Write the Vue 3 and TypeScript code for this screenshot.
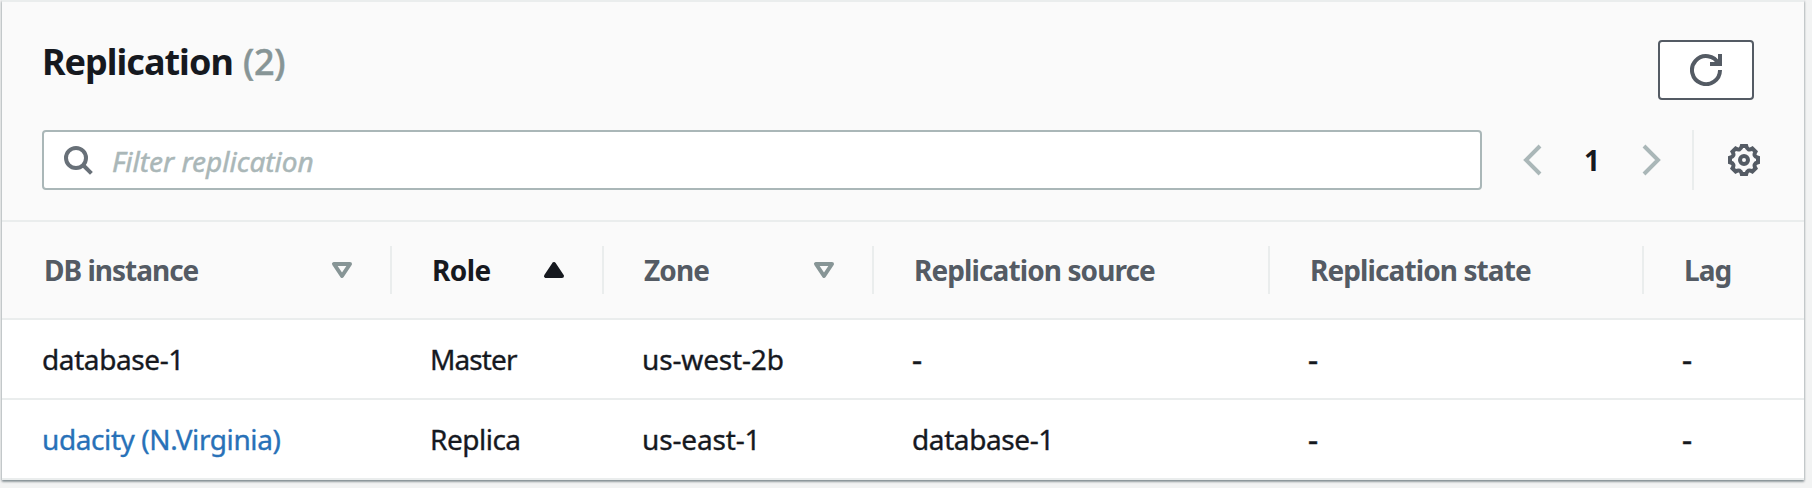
<script setup lang="ts">
type Sort = 'none' | 'asc' | null
interface Column { key: string; label: string; sort: Sort }
interface Cell { text: string; fit: string; link?: boolean }

const columns: Column[] = [
  { key: 'instance', label: 'DB instance', sort: 'none' },
  { key: 'role', label: 'Role', sort: 'asc' },
  { key: 'zone', label: 'Zone', sort: 'none' },
  { key: 'source', label: 'Replication source', sort: null },
  { key: 'state', label: 'Replication state', sort: null },
  { key: 'lag', label: 'Lag', sort: null },
]

const rows: Cell[][] = [
  [
    { text: 'database-1', fit: 'snug' },
    { text: 'Master', fit: 'tight' },
    { text: 'us-west-2b', fit: 'plain' },
    { text: '-', fit: 'dash' },
    { text: '-', fit: 'dash' },
    { text: '-', fit: 'dash' },
  ],
  [
    { text: 'udacity (N.Virginia)', fit: 'snug', link: true },
    { text: 'Replica', fit: 'close' },
    { text: 'us-east-1', fit: 'plain' },
    { text: 'database-1', fit: 'snug' },
    { text: '-', fit: 'dash' },
    { text: '-', fit: 'dash' },
  ],
]

// Outline of an eight-toothed wheel, centred on (16, 16).
const gear = Array.from({ length: 8 }, (_, i) => {
  const at = (deg: number, r: number) => {
    const a = ((i * 45 + deg) * Math.PI) / 180
    return `${(16 + r * Math.sin(a)).toFixed(2)} ${(16 - r * Math.cos(a)).toFixed(2)}`
  }
  return `${i ? 'L' : 'M'}${at(-9, 14.2)}L${at(9, 14.2)}Q${at(22.5, 9.4)} ${at(36, 14.2)}`
}).join('') + 'Z'
</script>

<template>
  <main class="page">
    <section class="panel">
      <header class="head">
        <div class="title-row">
          <h2 class="title"><span class="name">Replication</span><span class="count">(2)</span></h2>
          <button class="refresh" aria-label="Refresh">
            <svg class="icon" viewBox="0 0 16 16"><path d="M10 5h5V0" /><path d="M15 8a7 7 0 1 1-.7-3" /></svg>
          </button>
        </div>
        <div class="tools">
          <div class="filter">
            <svg class="icon search" viewBox="0 0 32 32"><circle cx="14" cy="14" r="10" /><path d="M21 21l8.4 8.4" /></svg>
            <span class="placeholder">Filter replication</span>
          </div>
          <nav class="pager">
            <svg class="icon chev" viewBox="0 0 16 16"><path d="M12 1L5 8l7 7" /></svg>
            <span class="num">1</span>
            <svg class="icon chev" viewBox="0 0 16 16"><path d="M4 1l7 7-7 7" /></svg>
          </nav>
          <div class="settings">
            <svg class="icon gear" viewBox="0 0 32 32"><path :d="gear" /><circle cx="16" cy="16" r="4" /></svg>
          </div>
        </div>
      </header>
      <div class="row labels">
        <div v-for="c in columns" :key="c.key" class="th" :class="{ active: c.sort === 'asc' }">
          <span class="text">{{ c.label }}</span>
          <svg v-if="c.sort" class="icon sort" :class="c.sort" viewBox="0 0 16 16">
            <path :d="c.sort === 'asc' ? 'M4 11h8L8 5l-4 6z' : 'M4 5h8l-4 6-4-6z'" />
          </svg>
        </div>
      </div>
      <div v-for="(r, i) in rows" :key="i" class="row data">
        <div v-for="(c, j) in r" :key="j" class="td">
          <a v-if="c.link" class="text link" :class="c.fit">{{ c.text }}</a>
          <span v-else class="text" :class="c.fit">{{ c.text }}</span>
        </div>
      </div>
    </section>
  </main>
</template>

<style>
html, body { background: #f2f3f3; margin: 0; overflow: hidden; }
</style>

<style scoped>
* { box-sizing: border-box; }
.page {
  width: 1812px; height: 488px; padding: 0 0 0 2px; background: #f2f3f3;
  font-family: "Noto Sans", "Open Sans", sans-serif; font-size: 28px; color: #16191f; overflow: hidden;
}
.panel {
  width: 1802px; height: 480px; background: #fff; border-top: 2px solid #eaeded;
  box-shadow: 0 2px 2px 0 rgba(0, 28, 36, .3), 1px 1px 2px 0 rgba(0, 28, 36, .15), -1px 1px 2px 0 rgba(0, 28, 36, .15);
}
.head { height: 220px; background: #fafafa; border-bottom: 2px solid #eaeded; padding: 38px 40px 0; }
.title-row { display: flex; justify-content: space-between; align-items: flex-start; height: 90px; padding-right: 10px; }
.title { margin: 0; font-size: 36px; line-height: 44px; font-weight: 700; white-space: nowrap; display: flex; }
.name { width: 201px; letter-spacing: -1px; }
.count { color: #879596; font-weight: 500; letter-spacing: -.3px; -webkit-text-stroke: .5px; }
.refresh {
  width: 96px; height: 60px; padding: 0; display: flex; align-items: center; justify-content: center;
  background: #fff; border: 2px solid #545b64; border-radius: 4px; color: #545b64;
}
.icon { width: 32px; height: 32px; display: block; fill: none; stroke: currentColor; stroke-width: 2; flex: none; }
.tools { display: flex; height: 60px; margin-right: -4px; }
.filter {
  width: 1440px; height: 60px; border: 2px solid #aab7b8; border-radius: 4px; background: #fff;
  display: flex; align-items: center; padding-left: 18px;
}
.search { stroke-width: 4; color: #687078; }
.placeholder {
  font-style: italic; color: #aab7b8; margin-left: 18px; padding-top: 2px; white-space: nowrap;
  -webkit-text-stroke: .5px;
}
.pager { display: flex; align-items: center; margin-left: 34px; width: 176px; justify-content: space-between; }
.chev { color: #aab7b8; }
.chev:last-child { margin-right: 24px; }
.num { font-weight: 700; }
.settings { flex: none; width: 68px; border-left: 2px solid #eaeded; display: flex; align-items: center; padding-left: 34px; }
.gear { stroke-width: 4; color: #545b64; }
.row { display: grid; grid-template-columns: 390px 212px 270px 396px 374px 160px; }
.labels { height: 98px; background: #fafafa; border-bottom: 2px solid #eaeded; align-items: center; }
.th {
  height: 48px; display: flex; align-items: center; justify-content: space-between;
  padding: 0 32px 0 40px; font-weight: 700; color: #545b64; border-right: 2px solid #eaeded; letter-spacing: -.9px;
}
.th:first-child { padding-left: 42px; letter-spacing: -1px; }
.th:last-child { border-right: 0; }
.active { color: #16191f; letter-spacing: -.6px; }
.sort.none { color: #879596; stroke-linejoin: round; }
.sort.asc { fill: currentColor; stroke-linejoin: round; }
.data { height: 80px; border-bottom: 2px solid #eaeded; align-items: center; }
.td { padding-left: 38px; -webkit-text-stroke: .35px; }
.td:first-child { padding-left: 40px; }
.text { white-space: nowrap; display: inline-block; }
.snug { letter-spacing: -.4px; }
.tight { letter-spacing: -.9px; }
.close { letter-spacing: -.5px; }
.plain { letter-spacing: -.15px; }
.dash { font-weight: 500; transform: scaleX(1.12); transform-origin: left; }
.link { color: #2871b8; }
</style>
